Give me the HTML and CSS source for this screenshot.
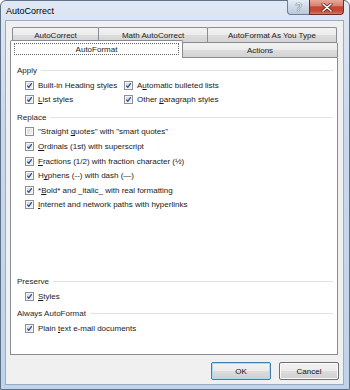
FILE: index.html
```html
<!DOCTYPE html>
<html lang="en">
<head>
    <meta charset="UTF-8">
    <title>AutoCorrect</title>
    <link rel="stylesheet" href="styles.css">
</head>
<body>
    <div class="window">
        <div class="titlebar">
            <span class="title">AutoCorrect</span>
            <div class="caption-buttons">
                <div class="cap-btn help">?</div>
                <div class="cap-btn close">
                    <svg width="12" height="9" viewBox="0 0 12 9">
                        <path d="M2 1 L10 8 M10 1 L2 8" stroke="#5a2a22" stroke-width="3" stroke-linecap="round"/>
                        <path d="M2 1 L10 8 M10 1 L2 8" stroke="#ffffff" stroke-width="1.6" stroke-linecap="round"/>
                    </svg>
                </div>
            </div>
        </div>
        <div class="client">
            <div class="tab-row back">
                <div class="tab t1">AutoCorrect</div>
                <div class="tab t2">Math AutoCorrect</div>
                <div class="tab t3">AutoFormat As You Type</div>
            </div>
            <div class="tab-row front">
                <div class="tab selected"><span class="focus">AutoFormat</span></div>
                <div class="tab actions">Actions</div>
            </div>
            <div class="panel">
                <div class="group">
                    <div class="group-title">Apply</div>
                    <div class="checks two-col">
                        <label class="check"><span class="box on"></span><span>Built-in Heading styles</span></label>
                        <label class="check"><span class="box on"></span><span>A<u>u</u>tomatic bulleted lists</span></label>
                        <label class="check"><span class="box on"></span><span><u>L</u>ist styles</span></label>
                        <label class="check"><span class="box on"></span><span>Other <u>p</u>aragraph styles</span></label>
                    </div>
                </div>
                <div class="group replace">
                    <div class="group-title">Replace</div>
                    <div class="checks">
                        <label class="check"><span class="box"></span><span>"Straight <u>q</u>uotes" with "smart quotes"</span></label>
                        <label class="check"><span class="box on"></span><span><u>O</u>rdinals (1st) with superscript</span></label>
                        <label class="check"><span class="box on"></span><span><u>F</u>ractions (1/2) with fraction character (½)</span></label>
                        <label class="check"><span class="box on"></span><span>H<u>y</u>phens (--) with dash (—)</span></label>
                        <label class="check"><span class="box on"></span><span>*<u>B</u>old* and _italic_ with real formatting</span></label>
                        <label class="check"><span class="box on"></span><span><u>I</u>nternet and network paths with hyperlinks</span></label>
                    </div>
                </div>
                <div class="group preserve">
                    <div class="group-title">Preserve</div>
                    <div class="checks">
                        <label class="check"><span class="box on"></span><span><u>S</u>tyles</span></label>
                    </div>
                </div>
                <div class="group always">
                    <div class="group-title">Always AutoFormat</div>
                    <div class="checks">
                        <label class="check"><span class="box on"></span><span>Plain <u>t</u>ext e-mail documents</span></label>
                    </div>
                </div>
            </div>
            <div class="buttons">
                <div class="button default">OK</div>
                <div class="button">Cancel</div>
            </div>
        </div>
    </div>
</body>
</html>
```

FILE: styles.css
```css
body {
    margin: 0;
    font-family: "Liberation Sans", Arial, sans-serif;
    font-size: 8px;
    color: #1a1a1a;
}
.window {
    width: 350px;
    height: 390px;
    box-sizing: border-box;
    border: 1px solid #5f7089;
    border-radius: 6px 6px 0 0;
    background: linear-gradient(#dfe8f3, #c9d9ec 30%, #bfd3ea);
    padding: 0 5px 4px 4px;
    display: flex;
    flex-direction: column;
}
.titlebar {
    height: 19px;
    display: flex;
    align-items: flex-start;
}
.title {
    margin: 5px 0 0 1px;
    font-size: 9px;
    color: #000;
}
.caption-buttons {
    margin-left: auto;
    margin-top: -1px;
    display: flex;
}
.cap-btn {
    height: 15px;
    box-sizing: border-box;
    border: 1px solid #6d7e95;
    border-top: none;
    display: flex;
    align-items: center;
    justify-content: center;
}
.help {
    width: 22px;
    border-radius: 0 0 0 4px;
    border-right: none;
    background: linear-gradient(#e6edf5, #cfdae7 50%, #bac9dc);
    color: #f4f7fa;
    font-size: 11px;
    text-shadow: 0 0 1px #3d4c60, 0 0 1px #3d4c60;
}
.close {
    width: 35px;
    border-radius: 0 0 4px 0;
    border-color: #6e2e25;
    background: linear-gradient(#e8a89b, #d9826f 40%, #c7432f 50%, #c24e3a 80%, #d97b66);
}
.client {
    flex: 1;
    border: 1px solid #9aacc3;
    background: #f0f0f0;
    padding: 6px 5px 0 4px;
    display: flex;
    flex-direction: column;
}
.tab-row {
    display: flex;
}
.tab-row.back {
    margin-left: 2px;
}
.tab-row.front {
    margin-top: -2px;
    align-items: flex-end;
}
.tab {
    box-sizing: border-box;
    border: 1px solid #898c95;
    border-bottom: none;
    border-radius: 2px 2px 0 0;
    background: linear-gradient(#f2f2f2, #ebebeb 50%, #dddddd 50%, #d3d3d3);
    display: flex;
    align-items: center;
    justify-content: center;
    color: #222;
}
.tab + .tab {
    margin-left: -1px;
}
.back .tab {
    height: 15px;
}
.t1 { width: 87px; }
.t2 { width: 110px; }
.t3 { width: 130px; }
.tab.selected {
    width: 173px;
    height: 18px;
    background: #fff;
    padding: 2px 3px 3px;
}
.focus {
    flex: 1;
    align-self: stretch;
    border: 1px dotted #666;
    display: flex;
    align-items: center;
    justify-content: center;
}
.tab.actions {
    width: 156px;
    height: 16px;
    border-bottom: 1px solid #898c95;
    border-radius: 2px 2px 0 0;
    padding-top: 1px;
}
.panel {
    width: 328px;
    height: 297px;
    box-sizing: border-box;
    border: 1px solid #898c95;
    border-top: none;
    background: #fff;
    padding: 5px 4px 18px 6px;
    display: flex;
    flex-direction: column;
}
.group-title {
    height: 15px;
    display: flex;
    align-items: center;
    gap: 4px;
    color: #1e1e1e;
}
.group-title::after {
    content: "";
    flex: 1;
    height: 1px;
    background: #dfe2e6;
}
.group.replace {
    margin-top: 2.5px;
}
.group.preserve {
    margin-top: auto;
}
.group.always {
    margin-top: 3px;
}
.checks {
    margin-left: 8px;
}
.checks.two-col {
    display: grid;
    grid-template-columns: 99px 1fr;
}
.check {
    height: 14.6px;
    display: flex;
    align-items: center;
    gap: 4px;
    white-space: nowrap;
}
.box {
    width: 9px;
    height: 9px;
    box-sizing: border-box;
    border: 1px solid #8e8f8f;
    background: linear-gradient(135deg, #d2d5da, #f4f4f4);
    box-shadow: inset 0 0 0 1px #f6f6f6;
    flex: none;
}
.box.on {
    background: url("data:image/svg+xml;utf8,<svg xmlns='http://www.w3.org/2000/svg' width='7' height='7' viewBox='0 0 7 7'><path d='M1.2 3.6 L2.8 5.3 L5.8 1.2' fill='none' stroke='%232c4d9c' stroke-width='1.3'/></svg>") no-repeat center, linear-gradient(135deg, #d2d5da, #f4f4f4);
}
.buttons {
    display: flex;
    justify-content: flex-end;
    gap: 8px;
    margin-top: 7px;
    margin-right: -1px;
}
.button {
    width: 60px;
    height: 18px;
    box-sizing: border-box;
    border: 1px solid #707070;
    border-radius: 2px;
    background: linear-gradient(#f2f2f2, #ebebeb 50%, #dddddd 50%, #cfcfcf);
    box-shadow: inset 0 0 0 1px #fbfbfb;
    display: flex;
    align-items: center;
    justify-content: center;
    color: #111;
}
.button.default {
    border-color: #3c7fb1;
    box-shadow: inset 0 0 0 1px #a6dcf4;
}
```
